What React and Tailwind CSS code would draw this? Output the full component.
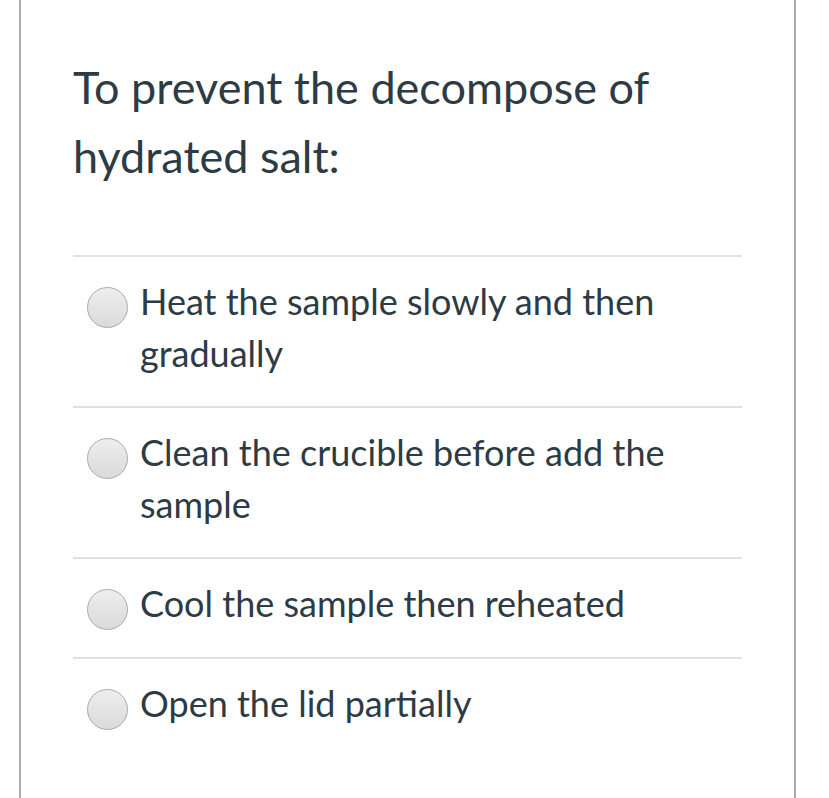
import React from "react";

const options = [
  "Heat the sample slowly and then gradually",
  "Clean the crucible before add the sample",
  "Cool the sample then reheated",
  "Open the lid partially",
];

const Radio = () => (
  <span className="mt-[12px] h-[41px] w-[41px] shrink-0 rounded-full border border-[#aaaaaa] bg-gradient-to-b from-[#eeeeee] to-[#dadada]" />
);

const App = () => {
  return (
    <div
      className="min-h-[798px] w-[829px] overflow-hidden bg-white text-[#2d3b45]"
      style={{ fontFamily: "Lato, 'Noto Sans', sans-serif" }}
    >
      <div className="ml-[19px] min-h-[798px] w-[777px] border-x-2 border-[#ababab] pl-[52px] pr-[52px] pt-[53px]">
        {/* Question */}
        <h1 className="pb-[64px] text-[45px] font-normal leading-[69px]">
          To prevent the decompose of hydrated salt:
        </h1>

        {/* Answers */}
        <div>
          {options.map((opt) => (
            <div
              key={opt}
              className="flex items-start gap-[12px] border-t-2 border-[#e0e0e0] pl-[14px] pt-[18px] pb-[27px]"
            >
              <Radio />
              <p className="text-[36px] leading-[52px]">{opt}</p>
            </div>
          ))}
        </div>
      </div>
    </div>
  );
};

export default App;
